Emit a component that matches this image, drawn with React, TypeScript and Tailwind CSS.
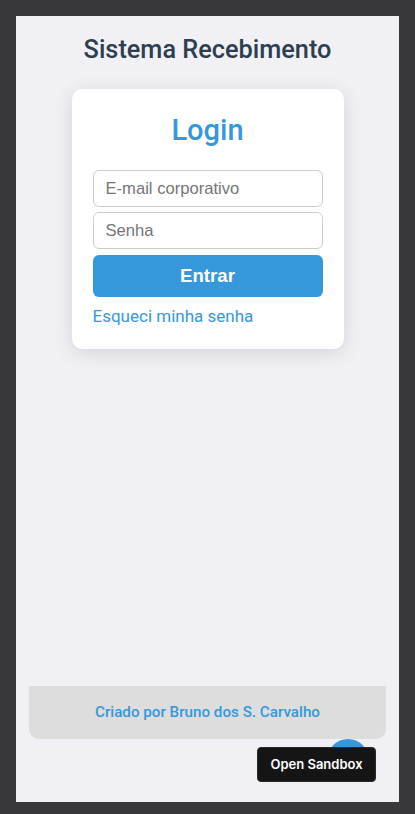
export default function App() {
  return (
    <div className="min-h-screen bg-[#38383b] pt-4 px-4" style={{ fontFamily: "Roboto, sans-serif" }}>
      <div className="relative h-[786px] bg-[#f0f0f5] flex flex-col items-center">
        <h1 className="mt-5 text-[25.3px] leading-[28px] font-medium text-[#2c3e50]">Sistema Recebimento</h1>

        <div className="mt-[25px] w-[272px] bg-white rounded-[10px] shadow-[0_4px_20px_rgba(0,0,0,0.12)] px-[21px] pt-5 pb-[23px] flex flex-col">
          <h2 className="text-[29px] leading-[42px] font-medium text-[#3498db] text-center mb-[19px]">Login</h2>
          <input
            type="text"
            placeholder="E-mail corporativo"
            className="h-[37px] mb-[5px] px-3 border border-[#cccccc] rounded-[6px] text-[16.6px] placeholder-[#757575] outline-none"
            style={{ fontFamily: "'Liberation Sans', Arial, sans-serif" }}
          />
          <input
            type="password"
            placeholder="Senha"
            className="h-[37px] mb-[6px] px-3 border border-[#cccccc] rounded-[6px] text-[16.6px] placeholder-[#757575] outline-none"
            style={{ fontFamily: "'Liberation Sans', Arial, sans-serif" }}
          />
          <button
            className="h-[42px] bg-[#3498db] text-white font-bold text-[18.6px] rounded-[6px]"
            style={{ fontFamily: "'Liberation Sans', Arial, sans-serif" }}
          >
            Entrar
          </button>
          <a href="#" className="mt-[10px] text-[17px] leading-[19px] text-[#3498db]">Esqueci minha senha</a>
        </div>

        <div className="flex-1" />

        <footer className="self-stretch mx-[13px] mb-[63px] h-[53px] bg-[#dddddd] rounded-b-[10px] flex items-center justify-center">
          <span className="text-[15.2px] font-medium text-[#3498db]">Criado por Bruno dos S. Carvalho</span>
        </footer>

        <div className="absolute left-[311px] top-[723px] w-[42px] h-[42px] rounded-full bg-[#3498db]" />
        <button
          className="absolute left-[241px] top-[731px] w-[119px] h-[35px] bg-[#151515] border border-[#2a2a2a] rounded-[4px] text-white text-[13px] font-semibold"
          style={{ fontFamily: "Inter, sans-serif" }}
        >
          Open Sandbox
        </button>
      </div>
    </div>
  );
}
